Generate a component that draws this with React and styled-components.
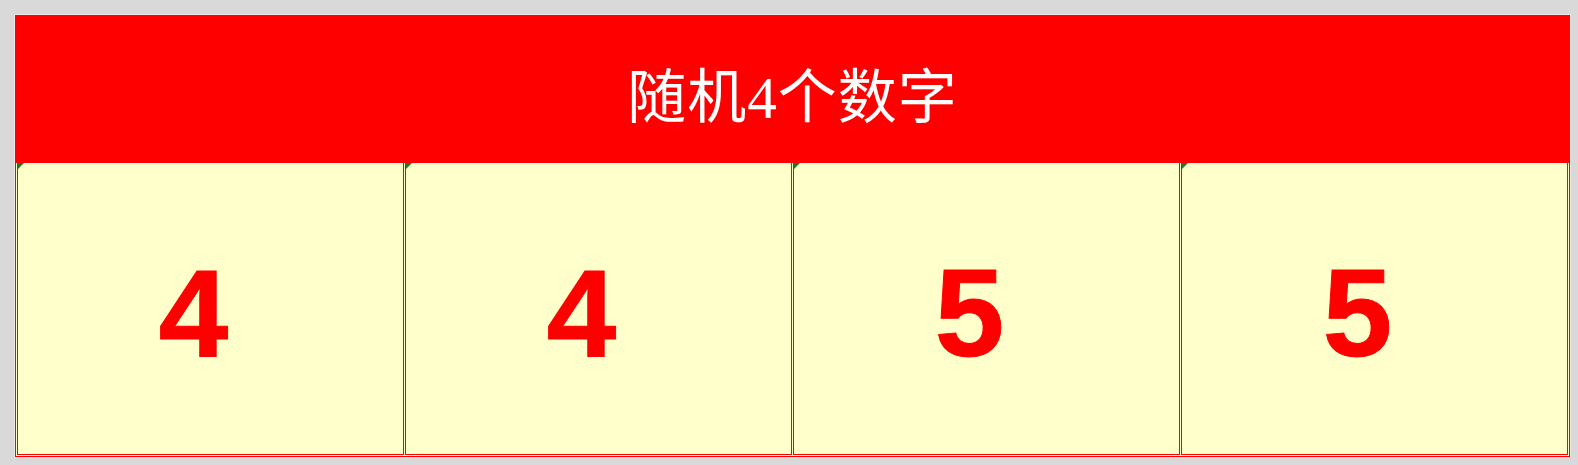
import React from "react";
import styled, { createGlobalStyle } from "styled-components";

const GlobalStyle = createGlobalStyle`
  html, body {
    margin: 0;
    padding: 0;
    background: #d9d9d9;
  }
  body {
    font-family: "Liberation Sans", Arial, sans-serif;
  }
`;

const Page = styled.div`
  padding: 15px 0 0 15px;
  width: 1555px;
`;

const Sheet = styled.div`
  display: flex;
  flex-direction: column;
  width: 1555px;
  outline: 1px solid #efe6e6;
`;

const Header = styled.div`
  height: 148px;
  background: #ff0000;
  display: flex;
  align-items: center;
  justify-content: center;
  padding-top: 6px;
  box-sizing: border-box;
  color: #ffffff;
  font-family: "Liberation Serif", "Noto Sans CJK SC", serif;
  font-size: 59px;
  letter-spacing: 1px;
`;

const Grid = styled.div`
  display: grid;
  grid-template-columns: repeat(4, 1fr);
  gap: 1px;
  padding: 0 1px 1px 1px;
  border: 1px solid #ff0000;
  border-top: none;
  background: #ffffcc;
  height: 294px;
  box-sizing: border-box;
`;

const Cell = styled.div`
  position: relative;
  border: 1px solid #ff0000;
  border-top: none;
  background: #ffffcc;
  display: flex;
  align-items: center;
  justify-content: center;
  padding: 8px 34px 0 0;
  box-sizing: border-box;
  color: #ff0000;
  font-family: "Liberation Sans", Arial, sans-serif;
  font-weight: bold;
  font-size: 125px;
  line-height: 1;
  -webkit-text-stroke: 1px #ff0000;
`;

const Marker = styled.span`
  position: absolute;
  top: 0;
  left: 0;
  width: 0;
  height: 0;
  border-top: 6px solid #1f7a1f;
  border-right: 6px solid transparent;
`;

const numbers = [4, 4, 5, 5];

export default function App() {
  return (
    <>
      <GlobalStyle />
      <Page>
        <Sheet>
          <Header>随机4个数字</Header>
          <Grid>
            {numbers.map((n, i) => (
              <Cell key={i}>
                <Marker />
                {n}
              </Cell>
            ))}
          </Grid>
        </Sheet>
      </Page>
    </>
  );
}
